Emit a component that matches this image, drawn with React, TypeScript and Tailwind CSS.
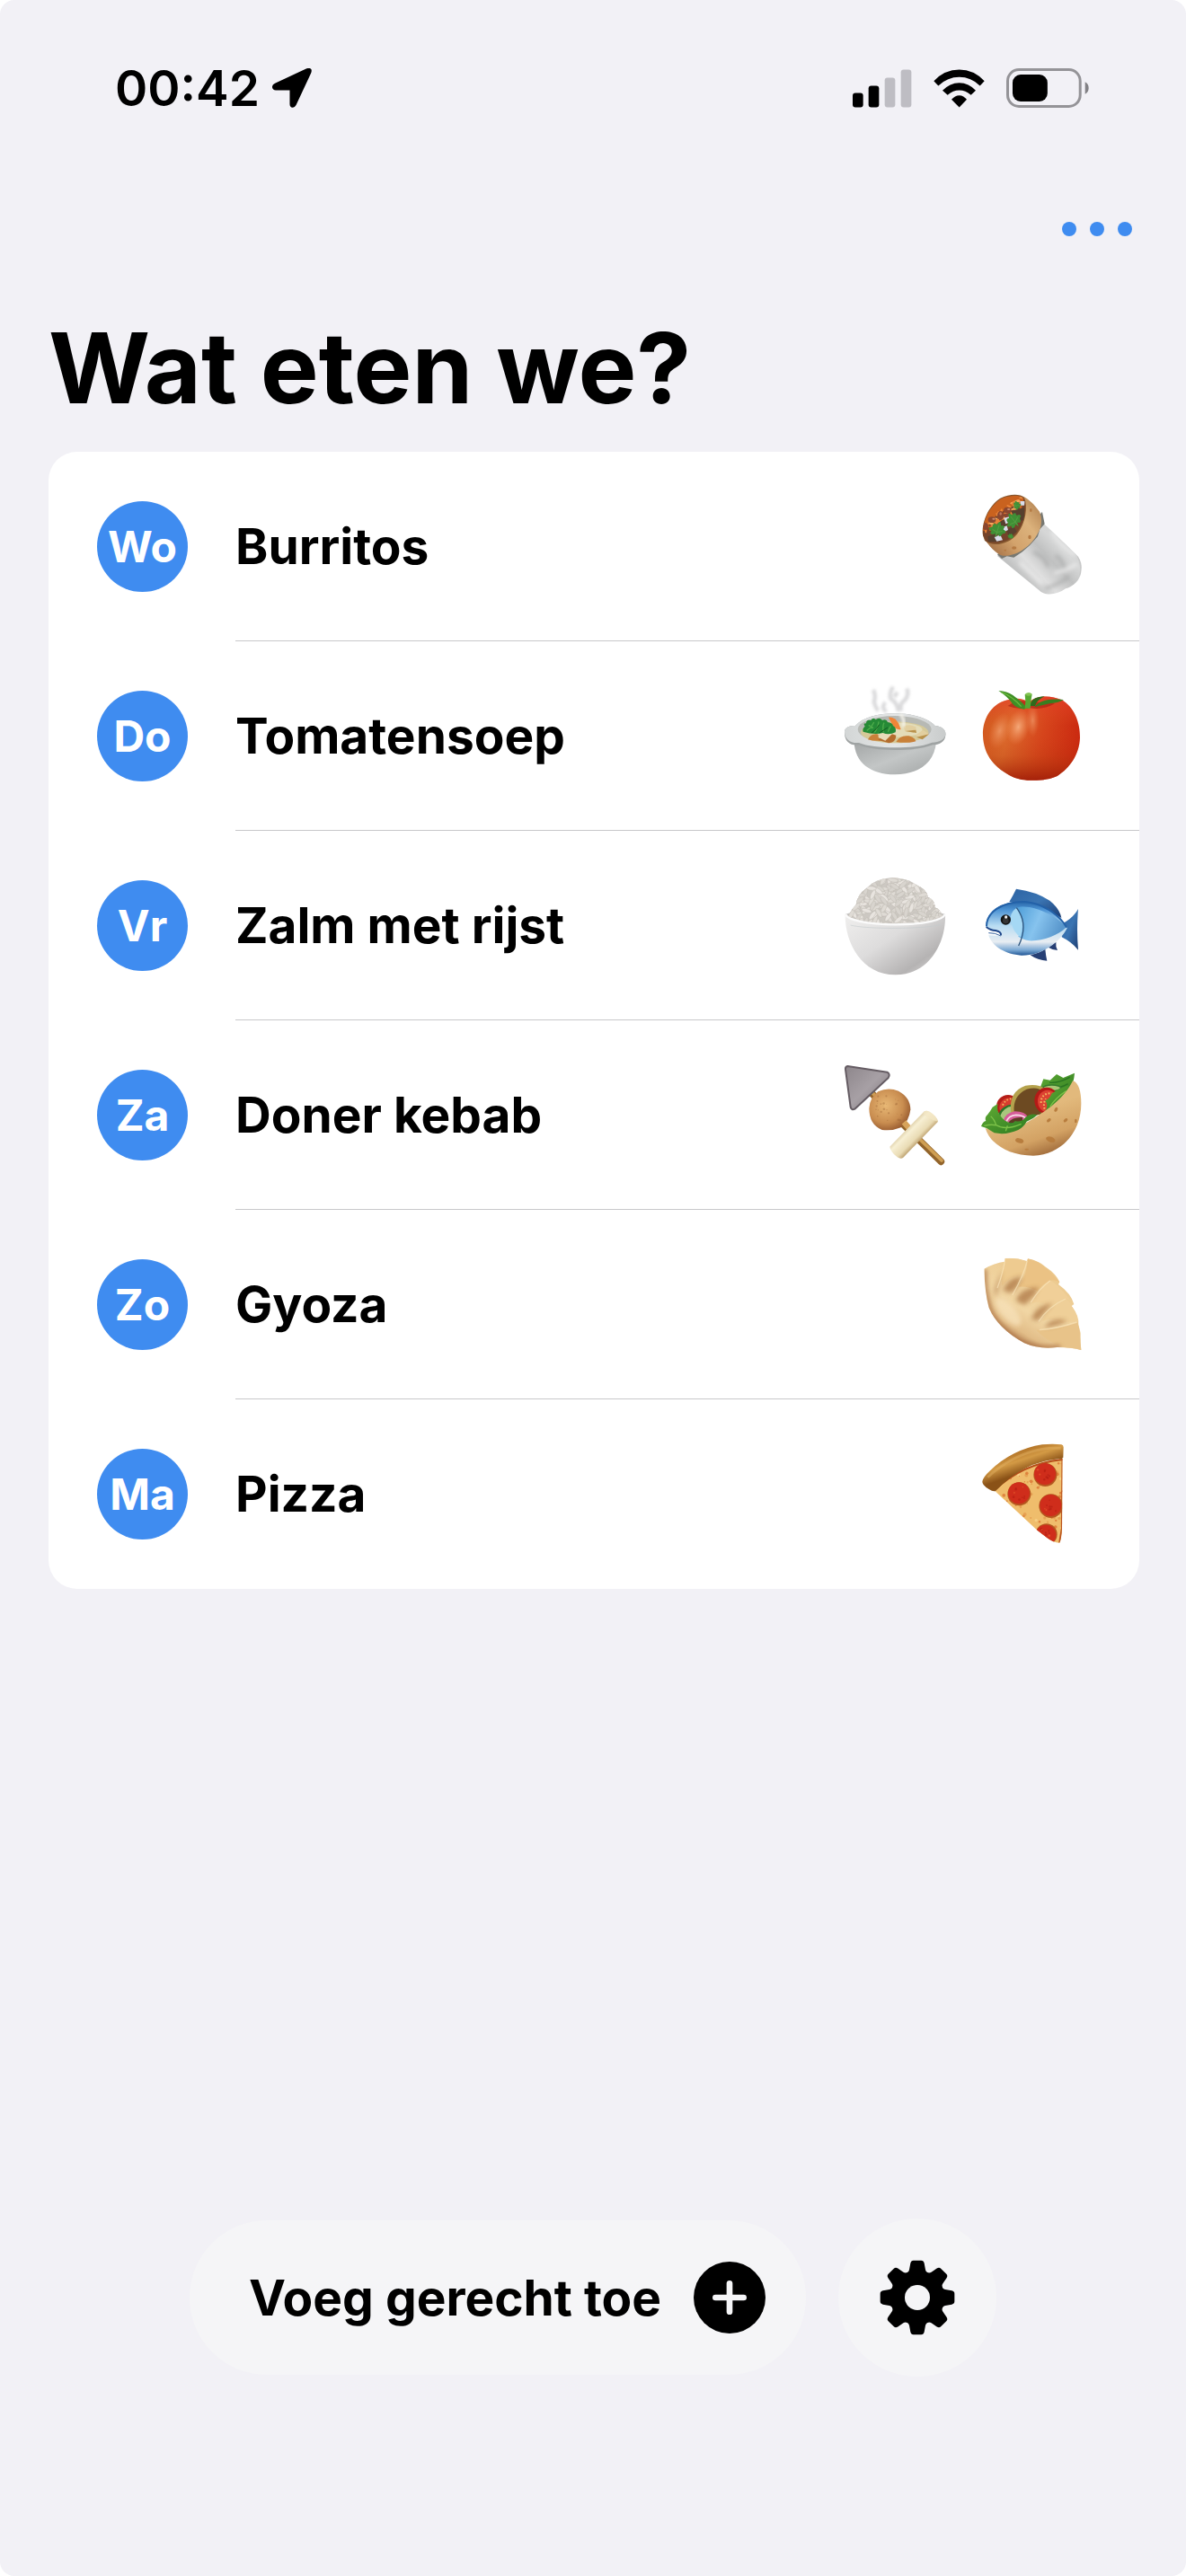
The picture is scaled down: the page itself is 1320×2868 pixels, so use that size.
import React from 'react';

interface Meal {
  day: string;
  dayName: string;
  name: string;
  icons: React.FC[];
}

// Small deterministic generator, keeps the grain textures stable between renders
const scatter = (count: number, seed: number) => {
  let s = seed;
  const next = () => {
    s = (s * 16807) % 2147483647;
    return s / 2147483647;
  };
  return Array.from({ length: count }, () => ({ a: next(), b: next(), c: next() }));
};

const Drawing: React.FC<{ label: string; viewBox: string; children: React.ReactNode }> = ({ label, viewBox, children }) => (
  <svg role="img" aria-label={label} viewBox={viewBox} className="w-[120px] h-[120px] shrink-0">
    {children}
  </svg>
);

const Leaf: React.FC<{ x: number; y: number; r: number; s: number }> = ({ x, y, r, s }) => (
  <g transform={`translate(${x} ${y}) rotate(${r}) scale(${s})`}>
    <path
      d="M0 26 L-4 12 Q-14 22 -22 14 Q-18 10 -20 6 Q-30 6 -31 -4 Q-22 -4 -20 -10 Q-22 -18 -14 -22 Q-8 -18 -6 -20 Q-4 -30 2 -32 Q8 -26 8 -20 Q16 -24 22 -18 Q18 -12 20 -8 Q30 -8 30 2 Q22 4 20 8 Q20 16 12 18 Q6 12 4 12 Z"
      fill="#3f8f35"
    />
    <path d="M0 20 L1 -20 M0 6 L-18 0 M0 6 L18 -2" stroke="#5fa549" strokeWidth="2" fill="none" />
  </g>
);

// --- Food drawings ---

const Burrito: React.FC = () => (
  <Drawing label="Burrito" viewBox="84 90 360 360">
    <defs>
      <linearGradient id="foil" gradientUnits="userSpaceOnUse" x1="230" y1="370" x2="375" y2="235">
        <stop offset="0" stopColor="#c2c3c3" />
        <stop offset="0.25" stopColor="#dfdfdf" />
        <stop offset="0.55" stopColor="#c0c1c1" />
        <stop offset="0.8" stopColor="#d6d7d7" />
        <stop offset="1" stopColor="#d3d4d4" />
      </linearGradient>
      <linearGradient id="wrap" gradientUnits="userSpaceOnUse" x1="130" y1="280" x2="295" y2="150">
        <stop offset="0" stopColor="#a9764a" />
        <stop offset="0.35" stopColor="#d3a36c" />
        <stop offset="0.7" stopColor="#dcb27c" />
        <stop offset="1" stopColor="#b98a58" />
      </linearGradient>
      <filter id="foilSoft" x="-20%" y="-20%" width="140%" height="140%">
        <feGaussianBlur stdDeviation="6" />
      </filter>
      <clipPath id="foilShape">
        <path d="M298 155 L306 196 C345 232 385 270 410 295 Q434 318 431 345 Q430 375 412 392 Q395 408 378 412 Q355 430 322 431 Q302 430 288 416 L150 303 Z" />
      </clipPath>
      <clipPath id="burritoMouth">
        <path d="M103 234 C98 195 120 140 160 113 C190 98 225 98 238 110 C250 135 242 190 214 226 C190 256 140 270 112 252 Z" />
      </clipPath>
    </defs>
    <g clipPath="url(#foilShape)">
      <rect x="140" y="150" width="300" height="290" fill="url(#foil)" />
      <g filter="url(#foilSoft)" fill="none" strokeWidth="12">
        <path d="M330 220 Q360 270 410 300 M225 325 L300 395 M340 360 Q385 350 415 330" stroke="#ededed" opacity="0.8" />
        <path d="M270 290 Q310 305 320 340 M345 300 Q375 325 372 345 M310 412 Q355 398 390 372" stroke="#a2a3a3" opacity="0.6" />
      </g>
      <path d="M300 180 Q372 240 412 292 Q436 330 426 368" stroke="#bfc0c0" strokeWidth="5" fill="none" opacity="0.6" />
    </g>
    <path d="M150 298 L165 312 L182 304 L205 308 L232 290 L258 268 L285 238 L292 214 L308 196 L300 156 L285 175 Z" fill="#777872" />
    <path d="M102 230 C108 258 148 298 168 302 C215 306 262 270 285 228 C300 205 300 175 291 155 C275 132 253 111 236 104 Z" fill="url(#wrap)" />
    <path d="M102 234 C96 195 118 137 160 110 C190 95 228 95 240 108 C253 137 245 195 216 230 C190 262 138 276 108 252 Z" fill="#87582f" />
    <g clipPath="url(#burritoMouth)">
      <rect x="95" y="95" width="160" height="170" fill="#74432a" />
      <path d="M98 215 Q110 140 160 105 L240 100 L236 124 Q190 138 160 160 Q124 180 112 220 Z" fill="#c9621f" />
      {scatter(80, 31).map((p, i) => {
        const x = 106 + p.a * 126;
        const y = 196 - p.a * 96 + p.b * 40;
        return (
          <ellipse
            key={i}
            cx={x}
            cy={y}
            rx="9"
            ry="3.5"
            transform={`rotate(${p.c * 120 - 90} ${x} ${y})`}
            fill={i % 3 === 0 ? '#c9601f' : i % 3 === 1 ? '#f6a85c' : '#e98338'}
          />
        );
      })}
      <g fill="#8a4730">
        <ellipse cx="132" cy="182" rx="13" ry="10" />
        <ellipse cx="161" cy="168" rx="11" ry="15" />
        <ellipse cx="184" cy="150" rx="13" ry="10" />
        <ellipse cx="110" cy="204" rx="10" ry="12" />
        <ellipse cx="182" cy="168" rx="10" ry="8" />
      </g>
      <path d="M118 238 L145 228 L160 254 L120 256 Z M150 195 L172 180 L185 205 L162 222 Z M195 152 L240 142 L240 182 L215 188 Z M180 215 L205 205 L215 222 L190 240 Z" fill="#57402f" />
      <path d="M172 176 L190 172 L196 188 L178 196 Z M140 240 L160 232 L168 250 L148 254 Z M226 120 L242 120 L240 134 L228 134 Z M166 208 L182 202 L186 216 L174 222 Z" fill="#d9ddec" />
      <ellipse cx="138" cy="179" rx="5" ry="3" fill="#c98d73" />
      <ellipse cx="188" cy="147" rx="5" ry="3" fill="#c98d73" />
      <ellipse cx="161" cy="162" rx="4" ry="5" fill="#b9745a" />
    </g>
    <Leaf x={150} y={218} r={15} s={0.95} />
    <Leaf x={206} y={186} r={-40} s={0.95} />
    <Leaf x={214} y={134} r={80} s={0.5} />
    <Leaf x={194} y={238} r={20} s={0.35} />
    <g fill="#b57a43">
      <ellipse cx="206" cy="276" rx="8" ry="5" />
      <ellipse cx="258" cy="240" rx="5" ry="7" />
      <ellipse cx="262" cy="150" rx="4" ry="6" />
      <ellipse cx="176" cy="284" rx="4" ry="3" />
    </g>
  </Drawing>
);

const Soup: React.FC = () => (
  <Drawing label="Soep" viewBox="48 61 360 360">
    <defs>
      <linearGradient id="pot" x1="0" y1="0" x2="1" y2="1">
        <stop offset="0" stopColor="#a3a6a6" />
        <stop offset="0.5" stopColor="#c3c6c6" />
        <stop offset="1" stopColor="#a2a5a5" />
      </linearGradient>
      <linearGradient id="rim" x1="0" y1="0" x2="1" y2="0">
        <stop offset="0" stopColor="#d3d6d6" />
        <stop offset="0.5" stopColor="#e4e6e6" />
        <stop offset="1" stopColor="#c9cccc" />
      </linearGradient>
      <filter id="steam" x="-40%" y="-40%" width="180%" height="180%">
        <feGaussianBlur stdDeviation="5" />
      </filter>
    </defs>
    <path d="M92 262 C94 330 145 371 228 371 C310 371 360 330 366 262 Z" fill="url(#pot)" />
    <path d="M60 232 C58 214 76 208 96 208 C120 180 175 167 228 167 C285 167 340 182 362 208 C385 210 400 222 397 240 C396 262 375 272 355 272 C325 284 280 289 228 289 C180 289 135 284 108 272 C80 276 60 262 60 232 Z" fill="#9fa3a3" />
    <path d="M60 228 C60 212 78 208 96 208 C120 180 175 167 228 167 C285 167 340 182 362 208 C385 210 398 220 397 235 C396 255 375 264 352 264 C325 276 280 281 228 281 C180 281 135 276 108 265 C80 268 60 252 60 228 Z" fill="url(#rim)" />
    <ellipse cx="227" cy="220" rx="123" ry="45" fill="#b7b9b4" />
    <ellipse cx="227" cy="230" rx="113" ry="36" fill="#d5c998" />
    <ellipse cx="240" cy="222" rx="80" ry="24" fill="#e4dcb8" />
    <path d="M138 254 Q148 232 170 236 L180 258 Q155 260 138 254 Z M232 262 Q245 238 275 242 Q296 248 298 260 Q265 268 232 262 Z" fill="#c98139" />
    <path d="M172 256 L192 236 Q218 232 232 240 Q232 262 208 266 Z" fill="#b46d2d" />
    <path d="M172 246 L180 234 L222 232 L196 258 Z" fill="#e9dcba" />
    <path d="M256 210 Q276 200 298 212 L300 232 L262 226 Z M296 240 L322 222 L342 236 L318 252 Z" fill="#e2cfa0" />
    <path d="M262 226 L300 232 L298 222 Z M300 246 L342 236 L320 254 Z" fill="#b9924c" />
    <path d="M207 180 Q228 178 240 200 L248 220 Q232 224 220 206 Z" fill="#f08538" />
    <path d="M122 228 Q118 218 128 210 Q120 200 132 200 Q132 186 148 190 Q156 178 164 188 Q176 178 186 190 Q200 184 204 196 Q220 198 222 208 Q234 214 230 230 Q208 240 188 232 Q160 240 122 228 Z" fill="#258a36" />
    <path d="M134 224 Q150 214 158 196 M160 230 Q172 214 174 194 M190 230 Q186 208 192 198 M205 228 Q210 216 214 210 M140 206 L156 216" stroke="#4dac4b" strokeWidth="4" fill="none" />
    <path d="M150 232 Q168 220 176 204 M176 232 L204 214" stroke="#12591f" strokeWidth="3" fill="none" />
    <g filter="url(#steam)" stroke="#b5b5b8" fill="none" strokeWidth="13" opacity="0.5">
      <path d="M156 88 Q166 110 158 128 Q162 145 172 158" />
      <path d="M222 78 Q208 100 214 118 Q236 130 240 160" />
      <path d="M268 84 Q276 104 262 122 Q240 136 250 158" />
      <path d="M196 130 Q180 150 200 160 M236 96 L226 112" />
    </g>
    <path d="M246 170 Q262 185 256 212" stroke="#f4f2ea" strokeWidth="10" fill="none" filter="url(#steam)" />
  </Drawing>
);

const Tomato: React.FC = () => (
  <Drawing label="Tomaat" viewBox="504 61 360 360">
    <defs>
      <linearGradient id="tomatoSkin" x1="0" y1="0.4" x2="1" y2="0.6">
        <stop offset="0" stopColor="#d2591f" />
        <stop offset="0.25" stopColor="#dc6a2c" />
        <stop offset="0.6" stopColor="#d6451c" />
        <stop offset="1" stopColor="#c9260f" />
      </linearGradient>
      <linearGradient id="tomatoShade" x1="0" y1="0" x2="0" y2="1">
        <stop offset="0" stopColor="#e8372a" stopOpacity="0.65" />
        <stop offset="0.35" stopColor="#e04a20" stopOpacity="0" />
        <stop offset="0.7" stopColor="#b03a0c" stopOpacity="0.2" />
        <stop offset="1" stopColor="#a01d08" stopOpacity="0.9" />
      </linearGradient>
      <radialGradient id="tomatoGlow">
        <stop offset="0" stopColor="#f6ab7c" stopOpacity="0.95" />
        <stop offset="1" stopColor="#f0905a" stopOpacity="0" />
      </radialGradient>
    </defs>
    <path d="M522 240 C520 180 556 128 612 120 C640 112 660 122 678 128 C700 108 745 104 785 122 C825 145 847 195 846 248 C844 305 812 350 770 376 C735 394 655 396 620 378 C565 350 524 310 522 240 Z" fill="url(#tomatoSkin)" />
    <path d="M522 240 C520 180 556 128 612 120 C640 112 660 122 678 128 C700 108 745 104 785 122 C825 145 847 195 846 248 C844 305 812 350 770 376 C735 394 655 396 620 378 C565 350 524 310 522 240 Z" fill="url(#tomatoShade)" />
    <ellipse cx="640" cy="212" rx="38" ry="62" fill="url(#tomatoGlow)" transform="rotate(14 640 212)" />
    <ellipse cx="578" cy="225" rx="34" ry="62" fill="url(#tomatoGlow)" opacity="0.65" transform="rotate(18 578 225)" />
    <ellipse cx="688" cy="190" rx="22" ry="55" fill="url(#tomatoGlow)" opacity="0.6" />
    <path d="M605 142 Q640 156 676 148 Q720 158 762 134 Q725 128 680 130 Q640 116 605 142 Z" fill="#9d1a10" opacity="0.55" />
    <path d="M574 91 Q602 92 622 106 Q648 124 668 146 L660 153 Q634 150 620 134 Q606 112 574 91 Z" fill="#3f8f25" />
    <path d="M694 146 Q716 114 792 121 Q772 132 744 134 Q718 140 694 146 Z" fill="#387d20" />
    <path d="M680 142 Q680 112 728 110 Q702 122 696 142 Z" fill="#2f6a1c" />
    <path d="M662 104 Q674 94 686 102 Q682 122 680 150 L662 150 Q666 126 662 104 Z" fill="#57a832" />
    <ellipse cx="674" cy="103" rx="10" ry="5" fill="#83c452" />
    <path d="M584 96 Q620 110 650 144" stroke="#6ab83e" strokeWidth="4" fill="none" />
  </Drawing>
);

const Rice: React.FC = () => (
  <Drawing label="Rijst" viewBox="48 64 360 360">
    <defs>
      <linearGradient id="bowl" x1="0" y1="0" x2="1" y2="0.9">
        <stop offset="0" stopColor="#f0efee" />
        <stop offset="0.45" stopColor="#dddcdc" />
        <stop offset="0.8" stopColor="#b5b3b3" />
        <stop offset="1" stopColor="#dcdbda" />
      </linearGradient>
      <clipPath id="riceDome">
        <path d="M72 215 Q84 190 98 176 Q104 140 132 122 Q160 90 214 86 Q270 86 300 110 Q335 125 338 150 Q362 160 362 184 Q382 195 388 215 Q380 240 230 246 Q82 240 72 215 Z" />
      </clipPath>
    </defs>
    <path d="M62 208 Q228 150 396 208 L390 250 L70 250 Z" fill="#c6c4c2" />
    <g clipPath="url(#riceDome)">
      <rect x="60" y="80" width="340" height="170" fill="#ccc8c2" />
      {scatter(260, 77).map((p, i) => {
        const x = 70 + p.a * 320;
        const y = 84 + p.b * 162;
        return (
          <ellipse
            key={i}
            cx={x}
            cy={y}
            rx="17"
            ry="6.5"
            transform={`rotate(${p.c * 150 - 90} ${x} ${y})`}
            fill={i % 3 === 0 ? '#e8e4df' : i % 3 === 1 ? '#dfdbd5' : '#d8d4ce'}
            stroke="#bdb8b1"
            strokeWidth="1.2"
          />
        );
      })}
    </g>
    <path d="M62 206 C64 222 130 240 230 240 C330 240 394 222 396 206 C400 300 345 410 230 410 C115 410 60 300 62 206 Z" fill="url(#bowl)" />
    <path d="M63 208 C70 226 130 242 230 242 C330 242 390 226 395 208" stroke="#fbfbfb" strokeWidth="7" fill="none" />
    <path d="M80 244 C130 258 330 258 380 242" stroke="#c4cccd" strokeWidth="3" fill="none" opacity="0.6" />
  </Drawing>
);

const Fish: React.FC = () => (
  <Drawing label="Vis" viewBox="504 64 360 360">
    <defs>
      <linearGradient id="fishBody" x1="0" y1="0" x2="0" y2="1">
        <stop offset="0" stopColor="#2866a8" />
        <stop offset="0.16" stopColor="#4c93d4" />
        <stop offset="0.45" stopColor="#b7dcf2" />
        <stop offset="0.75" stopColor="#e8edf2" />
        <stop offset="0.9" stopColor="#7ba9d4" />
        <stop offset="1" stopColor="#1f5494" />
      </linearGradient>
      <linearGradient id="fishSide" x1="0" y1="0" x2="1" y2="0.3">
        <stop offset="0" stopColor="#4d9dd8" />
        <stop offset="0.5" stopColor="#86c3ee" />
        <stop offset="1" stopColor="#5896cc" />
      </linearGradient>
      <linearGradient id="fin" x1="0" y1="0" x2="1" y2="1">
        <stop offset="0" stopColor="#2d64a4" />
        <stop offset="0.5" stopColor="#3a74b2" />
        <stop offset="1" stopColor="#1d3d72" />
      </linearGradient>
    </defs>
    <path d="M610 166 Q624 142 633 123 Q700 132 745 162 Q778 188 784 220 Q700 170 610 166 Z" fill="url(#fin)" />
    <path d="M785 240 Q822 222 840 190 Q834 258 840 327 Q818 300 785 284 Z" fill="url(#fin)" />
    <path d="M680 344 Q712 336 730 324 Q732 346 736 363 Q705 362 680 344 Z M740 318 L766 300 Q764 316 771 328 Q752 326 740 318 Z" fill="#263f74" />
    <path d="M531 250 C530 200 580 164 660 164 C720 168 775 205 804 252 C780 300 720 346 650 345 C598 342 552 315 541 278 L583 280 Q582 266 560 264 Q545 260 531 250 Z" fill="url(#fishBody)" />
    <path d="M634 186 C670 172 750 198 802 250 C770 280 720 298 676 296 Q652 290 640 282 Q670 230 634 186 Z" fill="url(#fishSide)" />
    <path d="M634 186 Q606 205 618 240 Q624 268 648 284 Q664 230 634 186 Z" fill="#a5d8f4" />
    <path d="M634 186 Q676 240 641 313" stroke="#31577f" strokeWidth="4" fill="none" />
    <path d="M534 248 C534 202 582 166 660 166 C720 170 775 207 802 252" stroke="#2361a8" strokeWidth="6" fill="none" />
    <path d="M533 250 Q548 262 564 262 Q584 266 582 278" stroke="#1c4488" strokeWidth="6" fill="none" />
    <path d="M541 270 L562 272 L582 280" stroke="#37639e" strokeWidth="3" fill="none" />
    <circle cx="598" cy="226" r="17" fill="#141414" />
    <circle cx="598" cy="229" r="10" fill="#353535" />
    <circle cx="599" cy="217" r="5" fill="#f2f2f2" />
  </Drawing>
);

const Skewer: React.FC = () => (
  <Drawing label="Spies" viewBox="48 67 360 360">
    <defs>
      <radialGradient id="ball" cx="0.4" cy="0.4" r="0.65">
        <stop offset="0" stopColor="#e8b875" />
        <stop offset="0.65" stopColor="#c98d50" />
        <stop offset="1" stopColor="#96592e" />
      </radialGradient>
      <linearGradient id="chikuwa" gradientUnits="userSpaceOnUse" x1="262" y1="282" x2="315" y2="335">
        <stop offset="0" stopColor="#cdb88b" />
        <stop offset="0.35" stopColor="#f7efd3" />
        <stop offset="0.75" stopColor="#e9dbb4" />
        <stop offset="1" stopColor="#b89a67" />
      </linearGradient>
      <linearGradient id="konjac" x1="0" y1="0" x2="1" y2="1">
        <stop offset="0" stopColor="#8d868b" />
        <stop offset="0.5" stopColor="#a7a0a5" />
        <stop offset="1" stopColor="#7a7278" />
      </linearGradient>
    </defs>
    <path d="M140 165 L382 404" stroke="#92642b" strokeWidth="23" strokeLinecap="round" />
    <path d="M140 162 L384 400" stroke="#cf9f53" strokeWidth="11" strokeLinecap="round" />
    <path d="M70 85 Q62 86 63 96 L80 222 Q84 234 94 228 L206 124 Q214 112 202 105 Z" fill="url(#konjac)" stroke="#655c63" strokeWidth="6" strokeLinejoin="round" />
    <path d="M142 226 Q144 190 172 170 Q205 154 240 168 Q280 190 280 230 Q276 268 248 290 Q220 302 185 298 Q142 280 142 226 Z" fill="url(#ball)" />
    {scatter(28, 19).map((p, i) => (
      <circle key={i} cx={165 + p.a * 90} cy={185 + p.b * 90} r={1 + p.c * 3} fill="#9c6434" opacity="0.4" />
    ))}
    <path d="M258 272 L274 290" stroke="#d6a35b" strokeWidth="19" />
    <path d="M322 240 Q328 230 344 237 Q368 252 372 270 L256 390 Q248 397 236 389 Q212 370 211 354 Z" fill="url(#chikuwa)" />
    <path d="M322 240 Q330 231 344 237 Q368 252 372 270 Q352 266 338 256 Q324 248 322 240 Z" fill="#f3e7c4" opacity="0.7" />
  </Drawing>
);

const Pita: React.FC = () => (
  <Drawing label="Gevulde pita" viewBox="504 67 360 360">
    <defs>
      <linearGradient id="pitaBread" gradientUnits="userSpaceOnUse" x1="680" y1="240" x2="730" y2="385">
        <stop offset="0" stopColor="#e2b97c" />
        <stop offset="0.6" stopColor="#d3a264" />
        <stop offset="1" stopColor="#a06b3a" />
      </linearGradient>
      <linearGradient id="lettuce" x1="0" y1="0" x2="1" y2="1">
        <stop offset="0" stopColor="#62ad35" />
        <stop offset="1" stopColor="#2a771f" />
      </linearGradient>
    </defs>
    <path d="M712 160 L724 128 L746 132 L768 112 L790 124 L828 108 Q826 140 810 170 L760 222 L690 230 Z" fill="url(#lettuce)" />
    <path d="M744 140 Q776 142 812 122 M740 160 Q780 160 806 144" stroke="#2a7422" strokeWidth="4" fill="none" />
    <ellipse cx="752" cy="158" rx="30" ry="10" fill="#a9c773" stroke="#357b2c" strokeWidth="5" />
    <circle cx="606" cy="220" r="39" fill="#b51d17" />
    <circle cx="610" cy="224" r="33" fill="#d93c2f" />
    <path d="M588 216 Q596 196 616 194" stroke="#f0b05c" strokeWidth="6" strokeDasharray="5 6" fill="none" />
    <ellipse cx="610" cy="248" rx="38" ry="28" fill="#a9c77d" stroke="#2d7428" strokeWidth="7" transform="rotate(-38 610 248)" />
    <path d="M616 240 Q606 170 664 150 Q710 144 726 160 L720 245 L640 262 Z" fill="#b5a24d" />
    <path d="M626 240 Q620 184 668 162 Q705 152 722 170 L716 245 L645 262 Z" fill="#6d4a22" />
    <ellipse cx="735" cy="200" rx="41" ry="44" fill="#b51a17" />
    <ellipse cx="738" cy="202" rx="33" ry="37" fill="#dc4232" />
    <path d="M716 208 Q716 176 748 176 M728 228 Q722 210 732 194" stroke="#f4ba62" strokeWidth="6" strokeDasharray="5 6" fill="none" />
    <path d="M590 268 Q596 242 628 236 Q664 236 672 256 L640 276 Z" fill="#d65c98" />
    <path d="M600 270 Q608 250 632 248 Q654 248 664 258" stroke="#f8d9e6" strokeWidth="5" fill="none" />
    <path d="M606 274 Q620 254 654 256 L654 274 Z" fill="#5d3b24" />
    <path d="M730 200 Q744 196 752 176 L780 160 L806 150 L815 165 L770 222 L730 236 Q742 216 730 200 Z" fill="url(#lettuce)" />
    <path d="M746 220 Q766 190 800 168" stroke="#7cc148" strokeWidth="4" fill="none" />
    <path d="M530 292 C545 345 610 384 690 384 C790 380 850 300 850 210 C850 170 842 140 822 134 C790 200 720 245 650 284 C610 302 570 306 530 292 Z" fill="url(#pitaBread)" />
    <path d="M516 286 Q522 270 532 268 Q526 256 538 246 Q546 236 554 222 L572 210 Q566 232 580 250 Q590 266 602 270 Q616 284 630 268 Q650 274 664 256 Q682 240 704 248 Q690 262 668 270 Q658 288 640 298 Q600 316 560 308 L534 292 Z" fill="url(#lettuce)" />
    <path d="M526 284 Q560 276 580 288 Q610 296 650 278 M548 252 Q560 262 566 282 M604 284 L598 302" stroke="#7cc148" strokeWidth="4" fill="none" />
    <g fill="#b87d3e">
      <ellipse cx="644" cy="334" rx="14" ry="8" transform="rotate(15 644 334)" />
      <ellipse cx="748" cy="330" rx="16" ry="9" transform="rotate(20 748 330)" />
      <ellipse cx="742" cy="266" rx="8" ry="5" transform="rotate(-40 742 266)" />
      <ellipse cx="798" cy="266" rx="8" ry="5" transform="rotate(-40 798 266)" />
      <ellipse cx="766" cy="230" rx="5" ry="8" transform="rotate(30 766 230)" />
      <ellipse cx="832" cy="268" rx="4" ry="7" />
      <ellipse cx="668" cy="363" rx="7" ry="3" />
    </g>
  </Drawing>
);

const Dumpling: React.FC = () => (
  <Drawing label="Gyoza" viewBox="84 70 360 360">
    <defs>
      <linearGradient id="dough" gradientUnits="userSpaceOnUse" x1="330" y1="150" x2="190" y2="380">
        <stop offset="0" stopColor="#ecc98e" />
        <stop offset="0.55" stopColor="#f1d6a4" />
        <stop offset="0.8" stopColor="#e2bd88" />
        <stop offset="1" stopColor="#a9754a" />
      </linearGradient>
      <filter id="fold" x="-40%" y="-40%" width="180%" height="180%">
        <feGaussianBlur stdDeviation="8" />
      </filter>
      <clipPath id="doughShape">
        <path d="M106 132 Q140 112 174 108 L176 97 Q214 94 248 106 L252 98 Q290 106 312 126 Q346 148 358 176 L354 184 Q396 214 406 250 L398 256 Q424 290 421 318 L428 346 Q426 380 431 404 Q400 394 350 394 Q290 402 240 380 Q150 330 122 262 Q108 210 106 132 Z" />
      </clipPath>
    </defs>
    <g clipPath="url(#doughShape)">
      <rect x="90" y="80" width="360" height="340" fill="url(#dough)" />
      <path d="M176 97 Q214 94 248 106 Q246 130 232 154 Q196 152 166 188 Q158 150 176 97 Z" fill="#eecb90" />
      <path d="M252 98 Q300 106 357 176 Q338 166 324 172 Q300 184 284 206 Q250 188 222 192 Q250 150 252 98 Z" fill="#ebc284" />
      <path d="M324 170 Q350 178 404 252 Q390 232 376 230 Q350 236 326 262 Q300 236 264 246 Q290 200 324 170 Z" fill="#f0cf98" />
      <path d="M378 230 Q410 256 420 310 Q390 304 366 314 Q340 292 300 306 Q320 262 378 230 Z" fill="#efcf98" />
      <path d="M418 308 Q430 350 431 404 Q340 400 280 336 Q350 336 418 308 Z" fill="#e8c389" />
      <g fill="#a9713f" filter="url(#fold)" opacity="0.7">
        <path d="M170 206 Q176 168 232 156 Q226 190 196 212 Z" />
        <path d="M212 238 Q226 196 288 194 Q272 230 240 252 Z" />
        <path d="M264 300 Q276 256 334 248 Q308 276 288 304 Z" />
        <path d="M308 324 Q336 292 384 306 Q350 322 318 328 Z" />
        <path d="M136 212 Q146 172 168 140 Q158 190 150 222 Z" opacity="0.6" />
      </g>
      <g stroke="#fae5bb" strokeWidth="4" fill="none" opacity="0.7">
        <path d="M176 100 Q168 150 150 196" />
        <path d="M250 104 Q240 150 200 220" />
        <path d="M326 172 Q290 198 262 244" />
        <path d="M378 232 Q320 258 288 308" />
        <path d="M416 310 Q350 332 290 336" />
      </g>
      <path d="M108 134 Q108 210 124 262 Q152 332 240 380 Q300 402 360 392" stroke="#a5683a" strokeWidth="10" fill="none" filter="url(#fold)" />
      <ellipse cx="186" cy="276" rx="24" ry="58" transform="rotate(-42 186 276)" fill="#f8e3bb" opacity="0.75" filter="url(#fold)" />
    </g>
  </Drawing>
);

const Pizza: React.FC = () => (
  <Drawing label="Pizza" viewBox="84 73 360 360">
    <defs>
      <linearGradient id="crust" gradientUnits="userSpaceOnUse" x1="220" y1="115" x2="242" y2="180">
        <stop offset="0" stopColor="#b7792b" />
        <stop offset="0.4" stopColor="#d39a45" />
        <stop offset="1" stopColor="#8a5217" />
      </linearGradient>
      <clipPath id="pizzaSlice">
        <path d="M138 240 Q230 150 368 136 L366 370 Q364 404 358 417 Q340 418 316 400 L280 372 Z" />
      </clipPath>
    </defs>
    <g clipPath="url(#pizzaSlice)">
      <rect x="120" y="120" width="260" height="310" fill="#efbd6c" />
      {scatter(100, 47).map((p, i) => (
        <circle key={i} cx={145 + p.a * 225} cy={145 + p.b * 265} r={2 + p.c * 4} fill={i % 3 === 0 ? '#d9712f' : i % 3 === 1 ? '#f8d58e' : '#e39a4c'} opacity="0.75" />
      ))}
      <path d="M138 240 Q230 150 368 136" stroke="#b54c18" strokeWidth="12" fill="none" />
      <path d="M368 136 L366 370 L358 417" stroke="#b9531d" strokeWidth="7" fill="none" />
      <g fill="#b5571f">
        <circle cx="310" cy="190" r="39" />
        <circle cx="223" cy="254" r="39" />
        <circle cx="329" cy="294" r="40" />
        <circle cx="314" cy="389" r="36" />
      </g>
      <g fill="#cf2d1b">
        <circle cx="309" cy="187" r="36" />
        <circle cx="222" cy="251" r="36" />
        <circle cx="328" cy="292" r="36" />
        <circle cx="312" cy="391" r="34" />
      </g>
      {scatter(36, 9).map((p, i) => {
        const spots = [[309, 187], [222, 251], [328, 292], [316, 385]];
        const [cx, cy] = spots[i % 4];
        return <circle key={i} cx={cx - 24 + p.a * 48} cy={cy - 22 + p.b * 44} r={2 + p.c * 2} fill={i % 5 === 0 ? '#e8602f' : '#b01c12'} opacity="0.6" />;
      })}
    </g>
    <path d="M100 212 Q104 196 126 176 Q200 105 300 89 Q335 85 364 89 Q371 91 371 98 L370 132 Q366 138 356 137 Q240 145 144 244 Q136 247 122 238 Q98 224 100 212 Z" fill="url(#crust)" />
    <path d="M118 198 Q200 122 300 104 Q330 99 362 101" stroke="#e2b263" strokeWidth="8" fill="none" opacity="0.45" />
  </Drawing>
);

// --- Interface icons ---

const LocationArrow: React.FC = () => (
  <svg aria-hidden="true" viewBox="580 52 131 131" className="w-11 h-11">
    <path d="M694 53 Q704 49 709 55 Q712 60 708 69 L659 174 Q654 183 647 182 Q638 181 638 170 V125 H592 Q581 124 580 115 Q579 107 589 102 Z" />
  </svg>
);

const Signal: React.FC = () => (
  <svg aria-hidden="true" viewBox="146 110 198 128" className="w-[66px] h-[43px]">
    <rect x="146" y="189" width="35" height="48" rx="9" />
    <rect x="199" y="165" width="35" height="72" rx="9" />
    <rect x="253" y="138" width="35" height="99" rx="9" fill="#bebdc3" />
    <rect x="307" y="111" width="35" height="126" rx="9" fill="#bebdc3" />
  </svg>
);

const Wifi: React.FC = () => (
  <svg aria-hidden="true" viewBox="415 110 171 128" className="w-[57px] h-[43px]">
    <path d="M416 149 Q452 111 501 111 Q549 111 585 149 L570 165 Q540 136 501 136 Q462 136 431 165 Z" />
    <path d="M445 181 Q469 155 501 155 Q533 155 556 181 L540 196 Q522 180 501 180 Q480 180 462 196 Z" />
    <path d="M475 211 Q486 197 501 197 Q516 197 526 211 L501 237 Z" />
  </svg>
);

const Battery: React.FC = () => (
  <svg aria-hidden="true" viewBox="660 108 277 132" className="w-[92px] h-11">
    <rect x="664.5" y="112.5" width="243" height="123" rx="38" fill="none" stroke="#949397" strokeWidth="9" />
    <rect x="681" y="129" width="117" height="90" rx="27" />
    <path d="M924 154 Q936 160 936 174 Q936 188 924 194 Z" fill="#828185" />
  </svg>
);

const PlusCircle: React.FC = () => (
  <svg aria-hidden="true" viewBox="0 0 240 240" className="w-20 h-20">
    <circle cx="120" cy="120" r="120" />
    <path d="M120 73 V167 M73 120 H167" stroke="#f5f5f7" strokeWidth="20" strokeLinecap="round" />
  </svg>
);

const Gear: React.FC = () => (
  <svg aria-hidden="true" viewBox="-126 -126 252 252" className="w-21 h-21">
    {[0, 45, 90, 135, 180, 225, 270, 315].map((angle) => (
      <path key={angle} transform={`rotate(${angle})`} d="M-42 -70 L-40 -81 Q-29 -84 -27 -93 L-23 -115 Q-21 -124 -13 -124 H13 Q21 -124 23 -115 L27 -93 Q29 -84 40 -81 L42 -70 Z" />
    ))}
    <circle r="87" />
    <circle r="42" fill="#f5f5f7" />
  </svg>
);

const meals: Meal[] = [
  { day: 'Wo', dayName: 'Woensdag', name: 'Burritos', icons: [Burrito] },
  { day: 'Do', dayName: 'Donderdag', name: 'Tomatensoep', icons: [Soup, Tomato] },
  { day: 'Vr', dayName: 'Vrijdag', name: 'Zalm met rijst', icons: [Rice, Fish] },
  { day: 'Za', dayName: 'Zaterdag', name: 'Doner kebab', icons: [Skewer, Pita] },
  { day: 'Zo', dayName: 'Zondag', name: 'Gyoza', icons: [Dumpling] },
  { day: 'Ma', dayName: 'Maandag', name: 'Pizza', icons: [Pizza] },
];

const MealRow: React.FC<{ meal: Meal }> = ({ meal }) => (
  <li className="group flex items-center pl-[54px] gap-[53px]">
    <abbr
      title={meal.dayName}
      className="w-[101px] h-[101px] shrink-0 rounded-full bg-[#3f8cf0] text-white text-[48px] leading-none font-bold no-underline flex items-center justify-center"
    >
      {meal.day}
    </abbr>
    <div className="flex-1 min-h-[211px] flex items-center justify-between pr-[60px] border-b border-[#c8c8ca] group-last:border-transparent">
      <span className="text-[55px] leading-[68px] font-bold">{meal.name}</span>
      <div className="flex gap-8">
        {meal.icons.map((Icon, i) => (
          <Icon key={i} />
        ))}
      </div>
    </div>
  </li>
);

const App: React.FC = () => {
  return (
    <div className="bg-white">
      <div className="min-h-screen flex flex-col rounded-2xl bg-[#f2f1f6] text-black font-['Inter','Liberation_Sans',sans-serif]">
        {/* Status bar */}
        <div className="flex items-center justify-between pt-[68px] pl-32 pr-[108px]">
          <div className="flex items-center gap-3.5">
            <time className="text-[55px] leading-[60px] font-semibold">00:42</time>
            <LocationArrow />
          </div>
          <div className="flex items-center gap-6">
            <Signal />
            <Wifi />
            <Battery />
          </div>
        </div>

        <header className="pt-[105px] px-[54px]">
          <div className="flex justify-end">
            <button type="button" aria-label="Meer" className="flex items-center gap-[15px] h-11 px-1.5">
              <span className="w-4 h-4 rounded-full bg-[#3f8cf0]" />
              <span className="w-4 h-4 rounded-full bg-[#3f8cf0]" />
              <span className="w-4 h-4 rounded-full bg-[#3f8cf0]" />
            </button>
          </div>
          <h1 className="mt-[66px] text-[109px] leading-[132px] font-bold">Wat eten we?</h1>
        </header>

        {/* Week menu */}
        <main className="flex-1 pt-7 pl-[54px] pr-[52px]">
          <ul className="bg-white rounded-[32px] overflow-hidden">
            {meals.map((meal) => (
              <MealRow key={meal.day} meal={meal} />
            ))}
          </ul>
        </main>

        <footer className="flex items-center justify-center gap-9 pb-[222px]">
          <button type="button" className="flex items-center gap-9 h-[172px] pl-[66px] pr-[45px] rounded-full bg-[#f5f5f7]">
            <span className="text-[55px] leading-[68px] font-bold">Voeg gerecht toe</span>
            <PlusCircle />
          </button>
          <button type="button" aria-label="Instellingen" className="w-44 h-44 rounded-full bg-[#f5f5f7] flex items-center justify-center">
            <Gear />
          </button>
        </footer>
      </div>
    </div>
  );
};

export default App;
